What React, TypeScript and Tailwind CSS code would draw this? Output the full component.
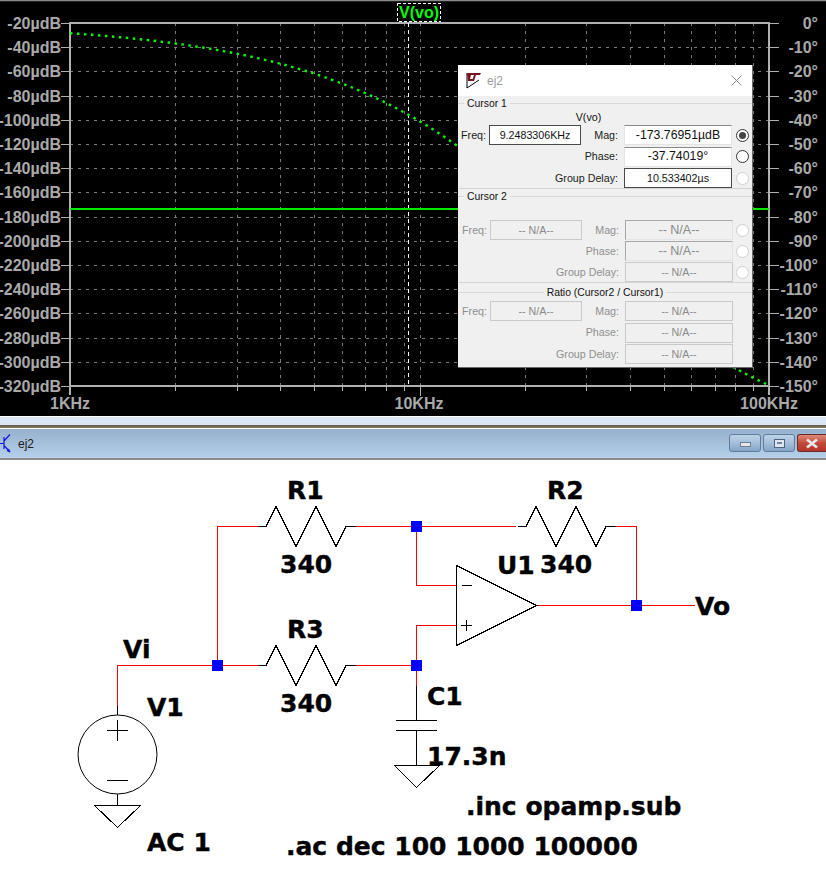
import React from "react";

const AXIS = "#b0b0b0";
const GRID = "#7a7a7a";
const GREEN = "#00ff00";
const LEFT = 70;
const RIGHT = 769;
const TOP = 23;
const BOTTOM = 386;
const STEP = (BOTTOM - TOP) / 15;
const DECADE = (RIGHT - LEFT) / 2;

const mags = Array.from({ length: 16 }, (_, i) => `-${20 + i * 20}µdB`);
const phases = Array.from({ length: 16 }, (_, i) => (i === 0 ? "0°" : `-${i * 10}°`));
const xTicks: number[] = [];
for (let d = 0; d < 2; d++) {
  for (let n = 2; n <= 10; n++) xTicks.push(LEFT + DECADE * (d + Math.log10(n)));
}

function phasePath() {
  const pts: string[] = [];
  for (let x = LEFT; x <= RIGHT; x += 2) {
    const f = 1000 * Math.pow(10, (x - LEFT) / DECADE);
    const deg = 2 * Math.atan(f / 27058) * (180 / Math.PI);
    pts.push(`${x},${(TOP + (deg * (BOTTOM - TOP)) / 150).toFixed(1)}`);
  }
  return "M" + pts.join(" L");
}

function Chart() {
  return (
    <svg className="block w-full h-full" viewBox="0 0 826 416">
      <line x1="0" x2="826" y1="0.5" y2="0.5" stroke="#8c8c8c" strokeWidth="1.5" />
      <g shapeRendering="crispEdges">
        {mags.map((_, i) =>
          i > 0 && i < 15 ? (
            <line key={i} x1={LEFT} x2={RIGHT} y1={Math.round(TOP + i * STEP) + 0.5} y2={Math.round(TOP + i * STEP) + 0.5} stroke={GRID} strokeDasharray="3 5" />
          ) : null,
        )}
        {xTicks.map((x, i) =>
          Math.abs(x - RIGHT) > 1 ? (
            <line key={i} x1={Math.round(x) + 0.5} x2={Math.round(x) + 0.5} y1={TOP} y2={BOTTOM} stroke={GRID} strokeDasharray="3 5" />
          ) : null,
        )}
        {xTicks.map((x, i) => (
          <line key={i} x1={Math.round(x) + 0.5} x2={Math.round(x) + 0.5} y1={BOTTOM} y2={Math.abs(x - 419.5) < 1 ? 396 : 391} stroke={AXIS} />
        ))}
        {mags.map((_, i) => (
          <g key={i}>
            <line x1="61" x2={LEFT} y1={Math.round(TOP + i * STEP) + 0.5} y2={Math.round(TOP + i * STEP) + 0.5} stroke={AXIS} />
            <line x1={RIGHT} x2="779" y1={Math.round(TOP + i * STEP) + 0.5} y2={Math.round(TOP + i * STEP) + 0.5} stroke={AXIS} />
          </g>
        ))}
        <rect x={LEFT - 1} y={TOP - 1} width={RIGHT - LEFT + 2} height="2" fill={AXIS} />
        <rect x={LEFT - 1} y={BOTTOM - 1} width={RIGHT - LEFT + 2} height="2" fill={AXIS} />
        <rect x={LEFT - 1} y={TOP - 1} width="2" height={396 - TOP} fill={AXIS} />
        <rect x={RIGHT - 1} y={TOP - 1} width="2" height={396 - TOP} fill={AXIS} />
        <line x1="408.5" x2="408.5" y1={TOP} y2={BOTTOM} stroke="#ffffff" strokeDasharray="4 3" />
        <rect x={LEFT} y="208" width={RIGHT - LEFT} height="2" fill="#00e800" />
        <rect x="397.5" y="3.5" width="43" height="18" fill="none" stroke="#ffffff" strokeDasharray="3 2" />
      </g>
      <path d={phasePath()} fill="none" stroke={GREEN} strokeWidth="2.4" strokeDasharray="2.5 4.5" />
      <g className="[font-family:'Liberation_Sans',sans-serif] font-bold text-[16px]" fill="#a9a9a9">
        {mags.map((m, i) => (
          <text key={m} x="61" y={TOP + i * STEP + 6} textAnchor="end">
            {m}
          </text>
        ))}
        {phases.map((p, i) => (
          <text key={p} x="818" y={TOP + i * STEP + 6} textAnchor="end">
            {p}
          </text>
        ))}
        <text x="70" y="409" textAnchor="middle">1KHz</text>
        <text x="419" y="409" textAnchor="middle">10KHz</text>
        <text x="769" y="409" textAnchor="middle">100KHz</text>
        <text x="419" y="18" textAnchor="middle" fill={GREEN}>V(vo)</text>
      </g>
    </svg>
  );
}

type BoxKind = "dark" | "soft" | "off" | "offsoft";

function ValueBox({ value, kind, width }: { value: string; kind: BoxKind; width: string }) {
  const cls =
    kind === "dark"
      ? "border-[#4a4a4a] bg-white text-[#111]"
      : kind === "soft"
        ? "border-[#e4e4e4] border-t-[#8a8a8a] bg-white text-[#111] text-[12.3px]"
        : kind === "offsoft"
          ? "border-[#e4e4e4] border-t-[#a8a8a8] border-l-[#a8a8a8] bg-[#f0f0f0] text-[#8a8a8a] text-[12.5px]"
          : "border-[#c9c9c9] bg-[#f0f0f0] text-[#8a8a8a]";
  return <div className={`${width} h-[20px] shrink-0 border flex items-center justify-center ${cls}`}>{value}</div>;
}

function Radio({ state }: { state: "on" | "idle" | "off" | "none" }) {
  if (state === "none") return <div className="w-[13px] shrink-0" />;
  const cls = state === "off" ? "border-[#cfcfcf] bg-white" : "border-[#333] bg-white";
  return (
    <div className={`w-[13px] h-[13px] shrink-0 rounded-full border flex items-center justify-center ${cls}`}>
      {state === "on" && <div className="w-[7px] h-[7px] rounded-full bg-[#444]" />}
    </div>
  );
}

function Row({
  label,
  value,
  kind,
  radio,
  freq,
  shift,
  off,
}: {
  label: string;
  value: string;
  kind: BoxKind;
  radio: "on" | "idle" | "off" | "none";
  freq?: { value: string; kind: BoxKind };
  shift?: boolean;
  off?: boolean;
}) {
  const text = off ? "text-[#8f8f8f]" : "text-[#1a1a1a]";
  return (
    <div className="flex items-center h-[20px]">
      {freq && (
        <div className={`flex items-center ${shift ? "w-[124px]" : "w-[123px]"} shrink-0`}>
          <span className={`${shift ? "w-[29px]" : "w-[28px]"} text-right shrink-0 ${text}`}>Freq:</span>
          <span className="w-[3px] shrink-0" />
          <ValueBox value={freq.value} kind={freq.kind} width="w-[92px]" />
        </div>
      )}
      <span className={`grow text-right whitespace-nowrap ${text}`}>{label}</span>
      <span className="w-[6px] shrink-0" />
      <ValueBox value={value} kind={kind} width="w-[108px]" />
      <span className={`${shift ? "w-[3px]" : "w-[4px]"} shrink-0`} />
      <Radio state={radio} />
      <span className="w-[3px] shrink-0" />
    </div>
  );
}

function Legend({ title, center, h }: { title: string; center?: boolean; h: string }) {
  return (
    <div className={`${h} flex items-center gap-[3px] text-[10.4px]`}>
      {center ? <div className="grow h-px bg-[#d9d9d9]" /> : <div className="w-[6px] h-px bg-[#d9d9d9]" />}
      <span className="whitespace-nowrap text-[#111] pt-[2px]">{title}</span>
      <div className="grow h-px bg-[#d9d9d9]" />
    </div>
  );
}

function CursorDialog() {
  return (
    <div className="absolute left-[458px] top-[65px] w-[295px] h-[303px] bg-[#f0f0f0] border-r border-b border-[#6a6a6a] text-[10.7px] leading-none [font-family:'Liberation_Sans',sans-serif]">
      <div className="h-[31px] bg-white flex items-center">
        <svg className="ml-[8px] w-[16px] h-[17px]" viewBox="0 0 16 17">
          <path d="M1 1 V16 L13 8" fill="none" stroke="#000" strokeWidth="1" />
          <path d="M1 1 H15 L14 3 H10 L8 9 H6 L8 3 H5 L4 7 H7 L6.5 9 H2 Z" fill="#7a1420" />
        </svg>
        <span className="ml-[5px] text-[12px] text-[#9c9c9c]">ej2</span>
        <svg className="ml-auto mr-[10px] w-[11px] h-[11px]" viewBox="0 0 11 11">
          <path d="M0.5 0.5 L10.5 10.5 M10.5 0.5 L0.5 10.5" stroke="#8a8a8a" strokeWidth="1" fill="none" />
        </svg>
      </div>

      <Legend title="Cursor 1" h="h-[14px]" />
      <div className="h-[14px] flex items-center justify-center pr-[33px] text-[#111]">V(vo)</div>
      <div className="mt-px flex flex-col gap-[1.5px]">
        <Row label="Mag:" value="-173.76951µdB" kind="soft" radio="on" freq={{ value: "9.2483306KHz", kind: "dark" }} />
        <Row label="Phase:" value="-37.74019°" kind="soft" radio="idle" />
        <Row label="Group Delay:" value="10.533402µs" kind="dark" radio="off" />
      </div>
      <div className="h-px bg-[#d4d4d4]" />

      <Legend title="Cursor 2" h="h-[14px]" />
      <div className="mt-[17px] flex flex-col gap-px">
        <Row label="Mag:" value="-- N/A--" kind="offsoft" radio="off" freq={{ value: "-- N/A--", kind: "off" }} shift off />
        <Row label="Phase:" value="-- N/A--" kind="offsoft" radio="off" shift off />
        <Row label="Group Delay:" value="-- N/A--" kind="off" radio="off" shift off />
      </div>
      <div className="h-px bg-[#d4d4d4]" />

      <Legend title="Ratio (Cursor2 / Cursor1)" center h="h-[18px]" />
      <div className="flex flex-col gap-[1.5px]">
        <Row label="Mag:" value="-- N/A--" kind="off" radio="none" freq={{ value: "-- N/A--", kind: "off" }} shift off />
        <Row label="Phase:" value="-- N/A--" kind="off" radio="none" shift off />
        <Row label="Group Delay:" value="-- N/A--" kind="off" radio="none" shift off />
      </div>
    </div>
  );
}

function WinButton({ kind }: { kind: "min" | "max" | "close" }) {
  if (kind === "close") {
    return (
      <div className="w-[29px] h-[18px] border border-r-0 border-[#6b2a2a] rounded-l-[3px] bg-linear-to-b from-[#dc8a78] via-[#c4493a] to-[#b4352c] flex items-center justify-center">
        <svg className="w-[14px] h-[11px]" viewBox="0 0 14 11">
          <path d="M2 1.5 L12 9.5 M12 1.5 L2 9.5" stroke="#e8e8e8" strokeWidth="2.8" fill="none" />
        </svg>
      </div>
    );
  }
  return (
    <div className="w-[32px] h-[18px] border border-[#5f7c9e] rounded-[3px] bg-linear-to-b from-[#bdd2e6] via-[#a5bfda] to-[#85a5c6] flex items-center justify-center">
      {kind === "min" ? (
        <div className="w-[11px] h-[5px] mt-[2px] bg-[#e6e6e6] border border-[#6a7f98]" />
      ) : (
        <div className="w-[11px] h-[9px] bg-[#dfe6ee] border border-[#4f6480] flex items-center justify-center">
          <div className="w-[5px] h-[2px] bg-[#6f87a6]" />
        </div>
      )}
    </div>
  );
}

function TitleBar() {
  return (
    <div className="h-[31px] shrink-0 border-b-2 border-[#8a8a8a] bg-linear-to-b from-[#95b1cd] to-[#b6d0ea] flex items-center [font-family:'Liberation_Sans',sans-serif]">
      <svg className="w-[12px] h-[19px] shrink-0" viewBox="0 0 12 19">
        <path d="M0 9.5 H4 M4 3 V15 M4 7 L10 0.5 M4 11.5 L10 18" stroke="#1414e0" strokeWidth="1.2" fill="none" />
        <path d="M10.5 18.5 L6.5 17 L9 14.5 Z" fill="#1414e0" />
      </svg>
      <span className="ml-[6px] text-[12px] text-[#1a1a1a]">ej2</span>
      <div className="ml-auto flex items-center gap-[2px] pb-[1px]">
        <WinButton kind="min" />
        <WinButton kind="max" />
        <WinButton kind="close" />
      </div>
    </div>
  );
}

const zig = (x: number, y: number) =>
  `${x},${y} ${x + 8},${y} ${x + 18},${y - 20} ${x + 38},${y + 20} ${x + 58},${y - 20} ${x + 78},${y + 20} ${x + 88},${y} ${x + 98},${y}`;

function Junction({ x, y }: { x: number; y: number }) {
  return <rect x={x - 5.5} y={y - 5.5} width="11" height="11" fill="#0000ff" />;
}

const labels: [string, number, number][] = [
  ["R1", 287, 499],
  ["340", 280, 573],
  ["R2", 547, 499],
  ["340", 540, 573],
  ["U1", 497, 574],
  ["Vo", 695, 615],
  ["R3", 287, 638],
  ["340", 280, 712],
  ["Vi", 123, 658],
  ["V1", 147, 716],
  ["C1", 427, 705],
  ["17.3n", 427, 765],
  [".inc opamp.sub", 466, 815],
  [".ac dec 100 1000 100000", 286, 855],
  ["AC 1", 147, 851],
];

function Schematic() {
  return (
    <svg className="block w-full h-full" viewBox="0 460 826 412">
      <g fill="none" stroke="#ff0000" shapeRendering="crispEdges">
        <polyline points="258,526.5 217.5,526.5 217.5,665.5 117.5,665.5 117.5,706" />
        <polyline points="217.5,665.5 258,665.5" />
        <polyline points="356,526.5 516,526.5" />
        <polyline points="416.5,526.5 416.5,585.5 456,585.5" />
        <polyline points="356,665.5 416.5,665.5 416.5,625.5 456,625.5" />
        <polyline points="416.5,665.5 416.5,686" />
        <polyline points="616,526.5 636.5,526.5 636.5,605.5" />
        <polyline points="536,605.5 695,605.5" />
      </g>
      <g fill="none" stroke="#000000" shapeRendering="crispEdges">
        <polyline points={zig(258, 526.5)} />
        <polyline points={zig(518, 526.5)} />
        <polyline points={zig(258, 665.5)} />
        <polygon points="456.5,565.5 456.5,645.5 536.5,605.5" />
        <path d="M462 585.5 H472 M461 625.5 H472 M466.5 620 V631" />
        <path d="M416.5 686 V720.5 M396 720.5 H437 M396 730.5 H437 M416.5 730.5 V765.5" />
        <polygon points="394.5,765.5 439.5,765.5 416.5,787.5" />
        <path d="M117.5 706 V715 M107 730.5 H128 M117.5 720 V741 M107 780.5 H128 M117.5 794 V805.5" />
        <polygon points="94.5,805.5 140.5,805.5 117.5,827.5" />
      </g>
      <circle cx="117.5" cy="754.5" r="39.5" fill="none" stroke="#000000" />
      <Junction x={217.5} y={665.5} />
      <Junction x={416.5} y={526.5} />
      <Junction x={416.5} y={665.5} />
      <Junction x={636.5} y={605.5} />
      <g className="[font-family:'DejaVu_Sans',sans-serif] font-bold text-[25px]" fill="#000000" stroke="#000000" strokeWidth="0.4">
        {labels.map(([t, x, y]) => (
          <text key={`${t}${x}${y}`} x={x} y={y}>
            {t}
          </text>
        ))}
      </g>
    </svg>
  );
}

export default function App() {
  return (
    <div className="w-[826px] h-[872px] flex flex-col bg-white overflow-hidden">
      <div className="relative h-[416px] shrink-0 bg-black">
        <Chart />
        <CursorDialog />
      </div>
      <div className="h-px shrink-0 bg-white" />
      <div className="h-[8px] shrink-0 bg-[#d8e5f2]" />
      <div className="h-[3px] shrink-0 bg-linear-to-b from-[#5f5847] to-[#8b8069]" />
      <div className="h-px shrink-0 bg-white" />
      <TitleBar />
      <div className="grow min-h-0">
        <Schematic />
      </div>
    </div>
  );
}
